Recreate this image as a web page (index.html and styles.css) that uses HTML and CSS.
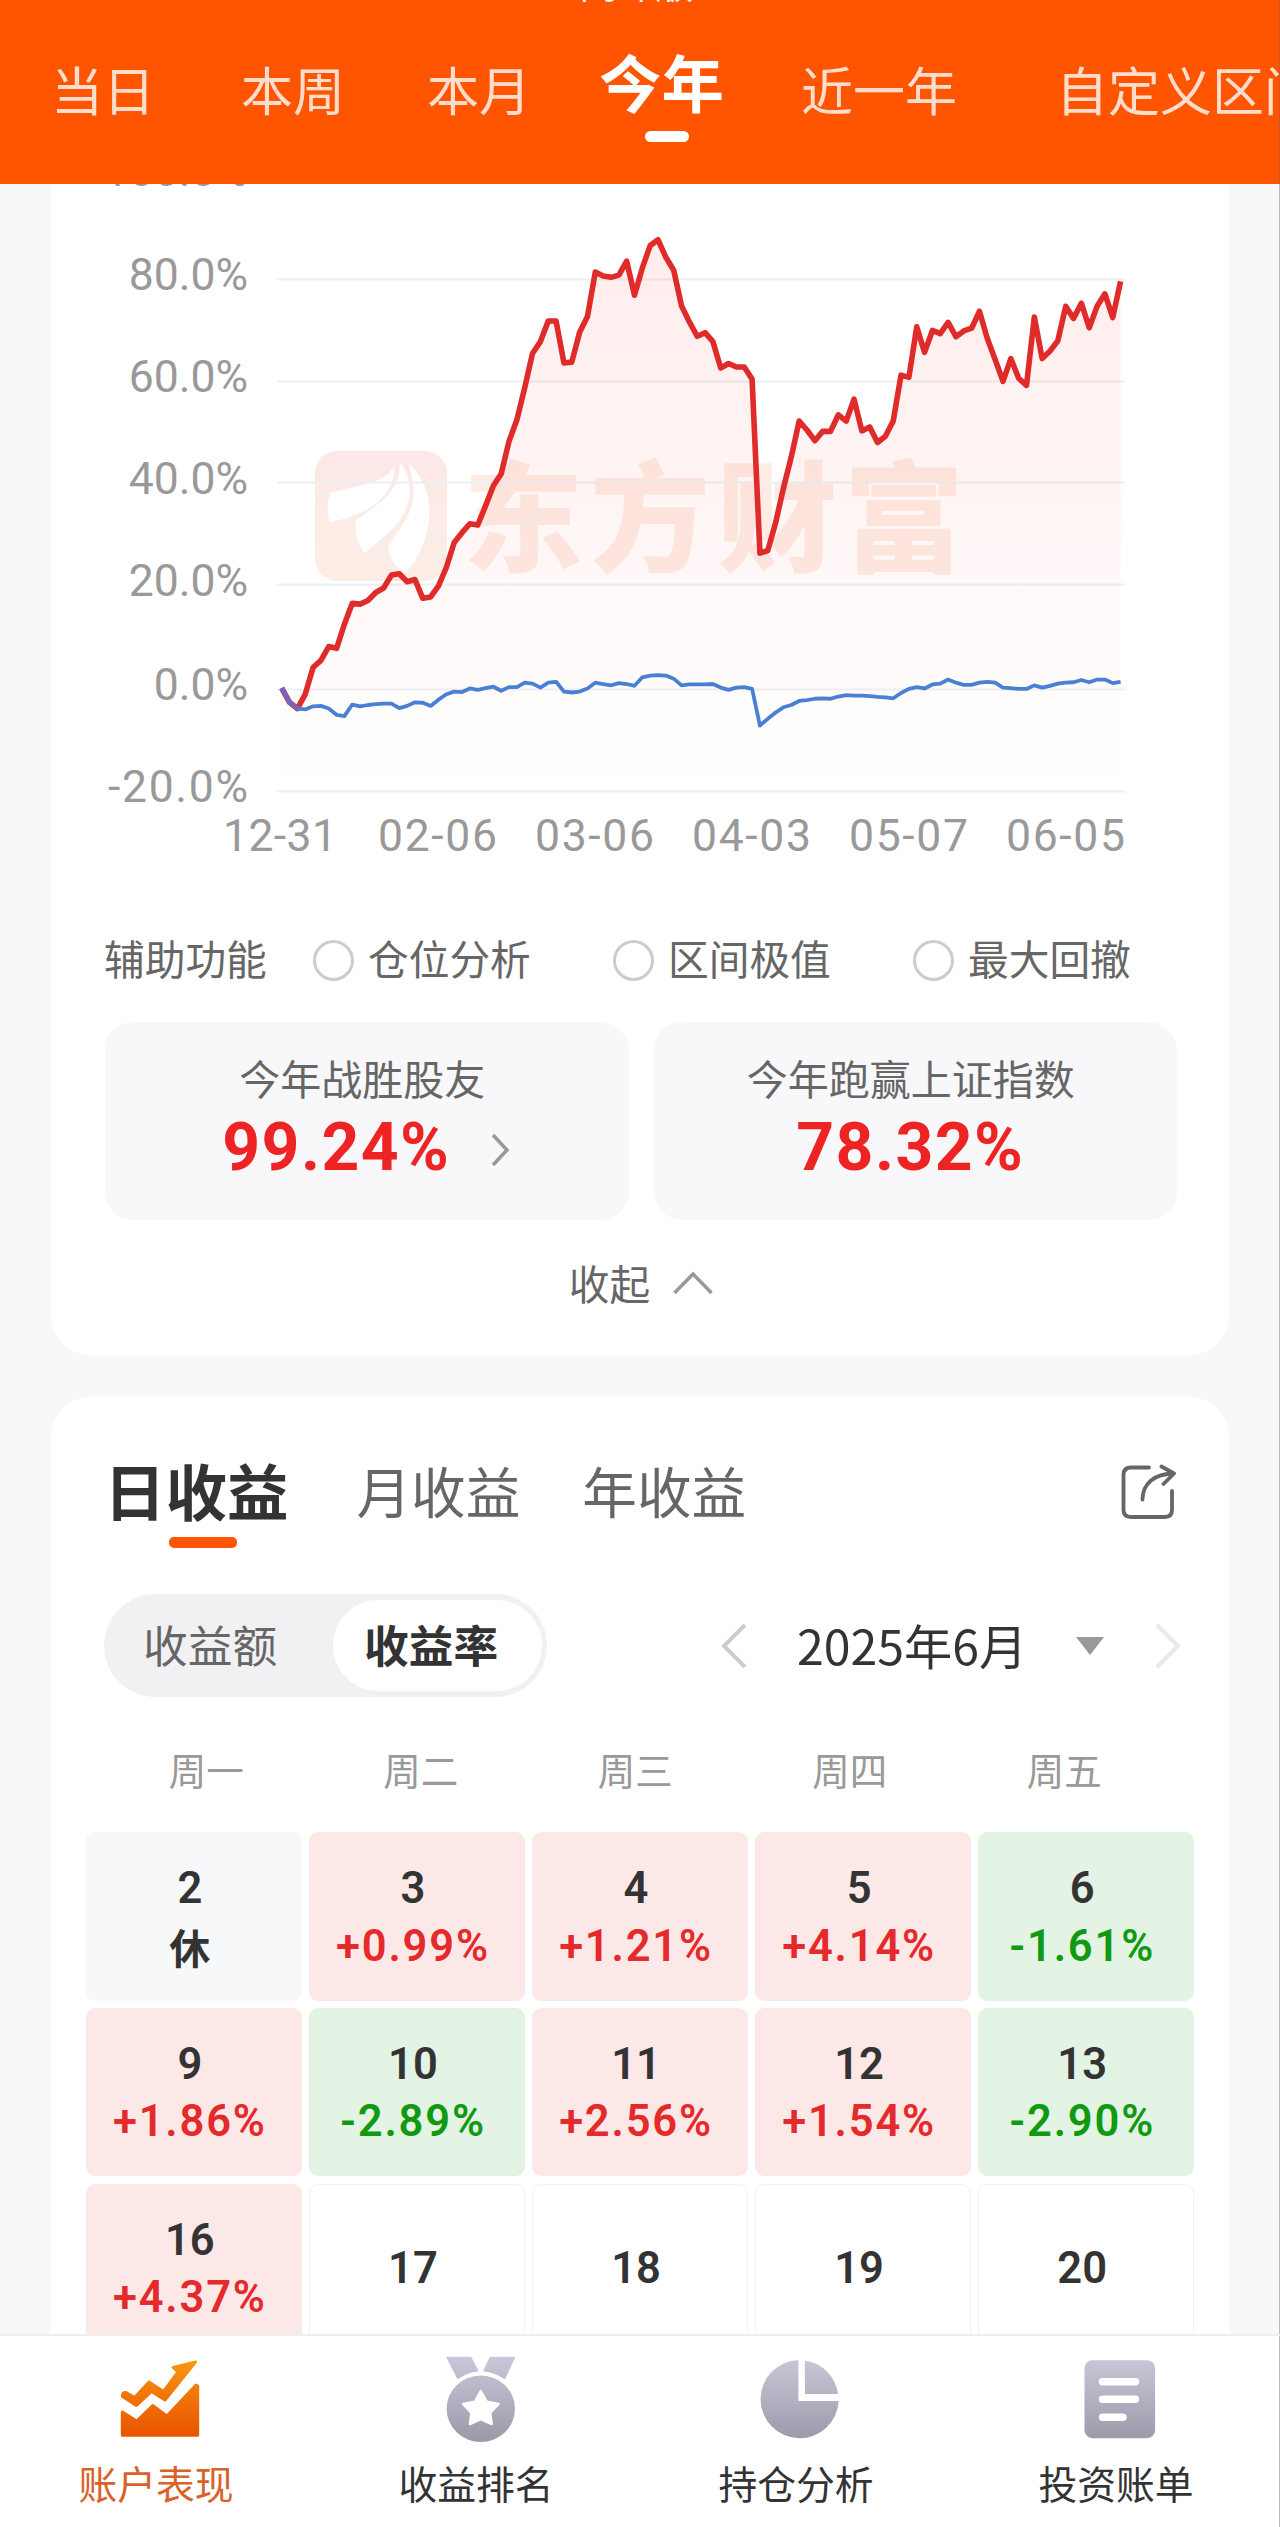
FILE: index.html
```html
<!DOCTYPE html>
<html lang="zh-CN">
<head>
<meta charset="utf-8">
<title>账户表现</title>
<link rel="stylesheet" href="styles.css">
</head>
<body>
<div class="app">
  <header class="header">
    <div class="title">问咔版</div>
    <nav class="ranges">
      <span class="range">当日</span>
      <span class="range">本周</span>
      <span class="range">本月</span>
      <span class="range active">今年</span>
      <span class="range">近一年</span>
      <span class="range">自定义区间</span>
    </nav>
  </header>

  <main class="content">
    <section class="card chart-card">
      <svg class="chart" viewBox="51 184 1178 704">
        <defs>
          <linearGradient id="area" x1="0" y1="0" x2="0" y2="1">
            <stop offset="0" stop-color="#f8453a" stop-opacity=".1"/>
            <stop offset="1" stop-color="#f8453a" stop-opacity="0"/>
          </linearGradient>
          <linearGradient id="mark" x1="0" y1="0" x2="0" y2="1">
            <stop offset="0" stop-color="#fce8e6"/>
            <stop offset="1" stop-color="#fceee6"/>
          </linearGradient>
        </defs>
        <rect x="315" y="451" width="132" height="130" rx="22" fill="url(#mark)"/>
        <g transform="translate(300 440) scale(.3333)" fill="#fff">
          <path d="M284 74C262 128 190 132 92 158Q76 195 88 247C200 226 284 175 284 74Z"/>
          <path d="M299 66C305 150 240 190 168 240Q160 290 193 339C280 270 340 220 328 130Q320 90 299 66Z"/>
          <path d="M325 70C365 200 320 230 265 320Q265 360 315 402C400 310 420 150 325 70Z"/>
        </g>
        <text class="watermark" x="463" y="563">东方财富</text>
        <g class="grid">
          <path d="M277 279.5H1125M277 381.5H1125M277 482.5H1125M277 584.5H1125M277 689.5H1125M277 791.5H1125"/>
        </g>
        <g transform="translate(281.7 180) scale(7.84 .44643)">
          <path fill="url(#area)" d="M0 1138L1 1170 2 1184 3 1152 4 1092 5 1076 6 1045 7 1049 8 995 9 948 10 950 11 942 12 924 13 914 14 885 15 882 16 900 17 895 18 937 19 934 20 909 21 868 22 812 23 790 24 770 25 773 26 730 27 685 28 658 29 585 30 537 31 465 32 388 33 362 34 316 35 316 36 410 37 408 38 341 39 306 40 206 41 215 42 218 43 213 44 182 45 258 46 197 47 147 48 134 49 173 50 202 51 282 52 318 53 350 54 342 55 362 56 421 57 411 58 419 59 419 60 446 61 836 62 830 63 768 64 690 65 620 66 540 67 560 68 584 69 563 70 563 71 526 72 540 73 491 74 562 75 553 76 588 77 574 78 540 79 437 80 442 81 329 82 386 83 337 84 344 85 319 86 351 87 338 88 332 89 294 90 355 91 402 92 451 93 400 94 444 95 460 96 307 97 400 98 383 99 360 100 283 101 310 102 276 103 331 104 283 105 255 106 308 107 227V1368H0Z"/>
          <path class="line red" d="M0 1138L1 1170 2 1184 3 1152 4 1092 5 1076 6 1045 7 1049 8 995 9 948 10 950 11 942 12 924 13 914 14 885 15 882 16 900 17 895 18 937 19 934 20 909 21 868 22 812 23 790 24 770 25 773 26 730 27 685 28 658 29 585 30 537 31 465 32 388 33 362 34 316 35 316 36 410 37 408 38 341 39 306 40 206 41 215 42 218 43 213 44 182 45 258 46 197 47 147 48 134 49 173 50 202 51 282 52 318 53 350 54 342 55 362 56 421 57 411 58 419 59 419 60 446 61 836 62 830 63 768 64 690 65 620 66 540 67 560 68 584 69 563 70 563 71 526 72 540 73 491 74 562 75 553 76 588 77 574 78 540 79 437 80 442 81 329 82 386 83 337 84 344 85 319 86 351 87 338 88 332 89 294 90 355 91 402 92 451 93 400 94 444 95 460 96 307 97 400 98 383 99 360 100 283 101 310 102 276 103 331 104 283 105 255 106 308 107 227"/>
          <path class="line blue" d="M0 1138L1 1170 2 1184 3 1186 4 1179 5 1178 6 1184 7 1198 8 1201 9 1175 10 1179 11 1176 12 1174 13 1173 14 1173 15 1183 16 1178 17 1170 18 1171 19 1178 20 1164 21 1152 22 1146 23 1147 24 1139 25 1142 26 1138 27 1135 28 1144 29 1136 30 1136 31 1126 32 1128 33 1137 34 1126 35 1124 36 1146 37 1148 38 1146 39 1139 40 1126 41 1129 42 1132 43 1127 44 1129 45 1133 46 1114 47 1110 48 1109 49 1110 50 1117 51 1132 52 1130 53 1130 54 1130 55 1129 56 1137 57 1142 58 1137 59 1136 60 1140 61 1222 62 1207 63 1193 64 1181 65 1176 66 1167 67 1165 68 1162 69 1161 70 1162 71 1157 72 1154 73 1155 74 1155 75 1156 76 1158 77 1159 78 1161 79 1149 80 1140 81 1136 82 1139 83 1130 84 1128 85 1119 86 1126 87 1131 88 1131 89 1126 90 1124 91 1126 92 1137 93 1138 94 1140 95 1140 96 1132 97 1137 98 1133 99 1128 100 1126 101 1125 102 1120 103 1125 104 1119 105 1119 106 1127 107 1124"/>
          <path class="line start" d="M0 1138L1 1170 2 1184"/>
        </g>
        <g class="axis end">
          <text x="248" y="186">100.0%</text>
          <text x="248" y="290">80.0%</text>
          <text x="248" y="392">60.0%</text>
          <text x="248" y="494">40.0%</text>
          <text x="248" y="596">20.0%</text>
          <text x="248" y="700">0.0%</text>
          <text x="248" y="802" textLength="140" lengthAdjust="spacing">-20.0%</text>
        </g>
        <g class="axis">
          <text x="223" y="851" textLength="114">12-31</text>
          <text x="378" y="851" textLength="119">02-06</text>
          <text x="535" y="851" textLength="119">03-06</text>
          <text x="692" y="851" textLength="119">04-03</text>
          <text x="849" y="851" textLength="119">05-07</text>
          <text x="1006" y="851" textLength="119">06-05</text>
        </g>
      </svg>

      <div class="aux">
        <span class="aux-label">辅助功能</span>
        <span class="option"><i class="radio"></i>仓位分析</span>
        <span class="option"><i class="radio"></i>区间极值</span>
        <span class="option"><i class="radio"></i>最大回撤</span>
      </div>

      <div class="stats">
        <div class="stat">
          <div class="stat-name">今年战胜股友</div>
          <div class="stat-value">99.24%
            <svg class="more" width="20" height="34" viewBox="0 0 20 34"><path d="M2 2L16 17 2 32" fill="none" stroke="#999" stroke-width="3.5"/></svg>
          </div>
        </div>
        <div class="stat right">
          <div class="stat-name">今年跑赢上证指数</div>
          <div class="stat-value">78.32%</div>
        </div>
      </div>

      <div class="collapse">收起
        <svg width="40" height="24" viewBox="0 0 40 24"><path d="M1.500 22L20 3 38.500 22" fill="none" stroke="#999" stroke-width="3.500"/></svg>
      </div>
    </section>

    <section class="card calendar-card">
      <div class="tabs">
        <span class="tab active">日收益</span>
        <span class="tab">月收益</span>
        <span class="tab">年收益</span>
        <svg class="share" width="56" height="56" viewBox="0 0 56 56" fill="none" stroke="#666" stroke-width="3.800" stroke-linecap="round" stroke-linejoin="round">
          <path d="M28 3.500H10Q2.500 3.500 2.500 11V46Q2.500 53 10 53H44Q51 53 51 46V27"/>
          <path d="M21.500 35.500C21.500 20 33 9.500 53 9.500M40.500 2.500L53 9.500 42.500 20"/>
        </svg>
      </div>

      <div class="controls">
        <div class="toggle">
          <span class="choice">收益额</span>
          <span class="choice on">收益率</span>
        </div>
        <div class="month">
          <svg width="28" height="46" viewBox="0 0 28 46"><path d="M25 2L4 23 25 44" fill="none" stroke="#ccc" stroke-width="4"/></svg>
          <span class="month-name">2025年6月</span>
          <i class="caret"></i>
          <svg width="28" height="46" viewBox="0 0 28 46"><path d="M3 2L24 23 3 44" fill="none" stroke="#e9e9e9" stroke-width="4"/></svg>
        </div>
      </div>

      <div class="weekdays">
        <span>周一</span><span>周二</span><span>周三</span><span>周四</span><span>周五</span>
      </div>

      <div class="days">
        <div class="day rest"><b>2</b><b class="off">休</b></div>
        <div class="day up"><b>3</b><em>+0.99%</em></div>
        <div class="day up"><b>4</b><em>+1.21%</em></div>
        <div class="day up"><b>5</b><em>+4.14%</em></div>
        <div class="day down"><b>6</b><em>-1.61%</em></div>
        <div class="day up"><b>9</b><em>+1.86%</em></div>
        <div class="day down"><b>10</b><em>-2.89%</em></div>
        <div class="day up"><b>11</b><em>+2.56%</em></div>
        <div class="day up"><b>12</b><em>+1.54%</em></div>
        <div class="day down"><b>13</b><em>-2.90%</em></div>
        <div class="day up"><b>16</b><em>+4.37%</em></div>
        <div class="day"><b>17</b></div>
        <div class="day"><b>18</b></div>
        <div class="day"><b>19</b></div>
        <div class="day"><b>20</b></div>
      </div>
    </section>
  </main>

  <nav class="bottom">
    <a class="item current">
      <svg width="80" height="90" viewBox="0 0 80 90">
        <defs>
          <linearGradient id="hot" gradientUnits="userSpaceOnUse" x1="0" y1="5" x2="0" y2="82"><stop offset="0" stop-color="#f89a10"/><stop offset=".5" stop-color="#f07208"/><stop offset="1" stop-color="#e85400"/></linearGradient>
          <linearGradient id="cool" gradientUnits="userSpaceOnUse" x1="0" y1="3" x2="0" y2="86"><stop offset="0" stop-color="#c8c6d8"/><stop offset="1" stop-color="#9c9aa9"/></linearGradient>
        </defs>
        <g fill="url(#hot)" stroke="url(#hot)" stroke-width="3" stroke-linejoin="round">
          <path d="M6 37.500L14.700 42.500 29 27 43.500 36.500 58 17 53 12.500 75.500 7 45 45 31.500 36.500 16.500 50.500 2.500 41.500Q2 37 6 37.500Z"/>
          <path d="M2.300 57L16.700 66 32.700 50.500 46.900 61 76 30 77.700 31V80.200H2.300Z"/>
        </g>
      </svg>
      <span>账户表现</span>
    </a>
    <a class="item">
      <svg width="80" height="90" viewBox="0 0 80 90">
        <g fill="url(#cool)" stroke="url(#cool)" stroke-width="2" stroke-linejoin="round">
          <path d="M7.500 2.700H30.500L37.200 15.500Q26 17 18 23Z"/>
          <path d="M50.500 2.700H74L64.500 23Q56 17 44.400 15.500Z"/>
        </g>
        <ellipse cx="40.800" cy="53.800" rx="34.200" ry="33.300" fill="url(#cool)"/>
        <path d="M40.800 36L46.600 46.700 58.500 49 50.200 57.800 51.700 69 40.800 64 29.900 69 31.400 57.800 23.100 49 35 46.700Z" fill="#fff" stroke="#fff" stroke-width="2.500" stroke-linejoin="round"/>
      </svg>
      <span>收益排名</span>
    </a>
    <a class="item">
      <svg width="80" height="90" viewBox="0 0 80 90">
        <path fill="url(#cool)" d="M38.400 5.100A39.100 39.100 0 1 0 78.700 46H38.400Z"/>
        <path fill="url(#cool)" d="M44.900 5.500A39 39 0 0 1 78 39H44.900Z"/>
      </svg>
      <span>持仓分析</span>
    </a>
    <a class="item">
      <svg width="80" height="90" viewBox="0 0 80 90">
        <rect x="4.500" y="5.200" width="70.600" height="78" rx="8" fill="url(#cool)"/>
        <path d="M22.500 26.700H55.500M22.500 44.300H55.500M22.500 62.200H43" stroke="#fff" stroke-width="7.400" stroke-linecap="round"/>
      </svg>
      <span>投资账单</span>
    </a>
  </nav>
</div>
</body>
</html>
```
FILE: styles.css
```css
* { box-sizing: border-box; }

body {
  margin: 0;
  background: #f6f8fa;
  font-family: "Noto Sans CJK SC", sans-serif;
  color: #333;
}

.app {
  width: 1280px;
  height: 2527px;
  display: flex;
  flex-direction: column;
  overflow: hidden;
  box-shadow: inset -1px 0 0 #b9bbbf;
  background: #f6f8fa;
}

.app svg { display: block; flex: none; }

/* header */
.header {
  height: 184px;
  flex: none;
  overflow: hidden;
  background: #ff5500;
  color: #fff;
  border-right: 1px solid #cf5a20;
}

.title {
  height: 36px;
  margin: -34px 0 0 -6px;
  font-size: 38px;
  line-height: 32px;
  text-align: center;
}

.ranges {
  display: flex;
  height: 150px;
  padding-left: 51px;
  white-space: nowrap;
}

.range {
  margin-right: 86px;
  padding-top: 51px;
  font-size: 52px;
  line-height: 72px;
  color: rgba(255, 255, 255, .8);
}

.range:nth-child(2) { margin-right: 82px; }
.range:nth-child(3) { margin-right: 68px; }
.range:nth-child(5) { margin-right: 99px; }

.range.active {
  margin-right: 77px;
  padding-top: 43px;
  font-size: 62.500px;
  font-weight: 700;
  color: #fff;
}

.range.active::after {
  content: "";
  display: block;
  width: 44px;
  height: 11px;
  margin: 14px 0 0 46px;
  border-radius: 6px;
  background: #fff;
}

/* cards */
.content {
  flex: 1;
  min-height: 0;
  overflow: hidden;
  padding: 0 51px;
}

.card { background: #fff; }

.chart-card {
  height: 1171px;
  border-radius: 0 0 38px 38px;
}

.chart { width: 1178px; height: 704px; }

.grid path { stroke: #edf0f3; stroke-width: 2; }

.line {
  fill: none;
  stroke-linejoin: round;
  vector-effect: non-scaling-stroke;
}

.red { stroke: #e02b2b; stroke-width: 5.600; }
.blue { stroke: #4a80d4; stroke-width: 3.800; }
.start { stroke: #7a62b4; stroke-width: 5; }

.axis text {
  font-family: Roboto, sans-serif;
  font-size: 44.500px;
  fill: #999;
}

.axis.end text { text-anchor: end; }

.watermark {
  font-size: 120px;
  font-weight: 900;
  letter-spacing: 7px;
  fill: #fdece4;
}

.aux {
  display: flex;
  align-items: center;
  height: 134px;
  padding: 6px 0 0 53px;
  font-size: 40.700px;
  line-height: 60px;
  color: #666;
}

.aux-label { width: 209px; }

.option {
  display: flex;
  align-items: center;
  gap: 14px;
  width: 300px;
  white-space: nowrap;
}

.radio {
  width: 41px;
  height: 41px;
  margin-top: 5px;
  border: 3px solid #ccc;
  border-radius: 50%;
}

.stats {
  display: flex;
  gap: 25px;
  padding: 0 52px 0 54px;
}

.stat {
  flex: 1;
  height: 198px;
  padding-top: 25px;
  border-radius: 28px;
  background: #f8f8fb;
}

.stat-name {
  margin-left: -9px;
  font-size: 41px;
  line-height: 60px;
  text-align: center;
  color: #666;
}

.stat-value {
  display: flex;
  align-items: center;
  justify-content: center;
  margin-top: 3px;
  font-family: Roboto, sans-serif;
  font-size: 66px;
  font-weight: 700;
  line-height: 76px;
  letter-spacing: 1.400px;
  color: #ee2424;
}

.stat-value .more { margin: 4px 0 0 41px; }

.stat.right .stat-value { margin-left: -10px; }

.collapse {
  display: flex;
  justify-content: center;
  align-items: center;
  gap: 23px;
  margin: 33px 0 0 2px;
  font-size: 40.700px;
  line-height: 60px;
  color: #666;
}

/* calendar */
.calendar-card {
  height: 1030px;
  margin-top: 42px;
  padding-top: 50px;
  border-radius: 38px 38px 0 0;
}

.tabs {
  display: flex;
  padding: 0 52px 0 53px;
}

.tab {
  margin-right: 62px;
  font-size: 54.600px;
  line-height: 86px;
  color: #666;
}

.tab.active {
  margin-right: 68px;
  font-size: 61.500px;
  font-weight: 700;
  color: #333;
}

.tab.active::after {
  content: "";
  display: block;
  width: 68px;
  height: 11px;
  margin: 4px 0 0 65px;
  border-radius: 5px;
  background: #ff5500;
}

.share { margin: 17px 0 0 auto; }

.controls {
  display: flex;
  justify-content: space-between;
  align-items: center;
  margin-top: 46px;
  padding: 0 47px 0 53px;
}

.toggle {
  display: flex;
  width: 443px;
  height: 103px;
  padding: 6px 5px 6px 0;
  border-radius: 52px;
  background: #f1f1f4;
}

.choice {
  width: 229px;
  padding-left: 39px;
  font-size: 44.700px;
  line-height: 88px;
  color: #666;
}

.choice.on {
  width: 209px;
  padding-left: 31px;
  border-radius: 46px;
  background: #fff;
  font-weight: 700;
  color: #333;
}

.month {
  display: flex;
  align-items: center;
}

.month-name {
  margin: -4px 0 0 49px;
  width: 228px;
  font-size: 48.200px;
  line-height: 70px;
  white-space: nowrap;
}

.caret {
  margin: 0 50px 0 51px;
  border: 14px solid transparent;
  border-top: 18px solid #999;
  border-bottom: 0;
}

.weekdays {
  display: grid;
  grid-template-columns: repeat(5, 214.500px);
  margin: 43px 0 0 48px;
  font-size: 37.500px;
  line-height: 58px;
  text-align: center;
  color: #999;
}

.days {
  display: grid;
  grid-template-columns: repeat(5, 215.700px);
  grid-auto-rows: 168.500px;
  gap: 7.400px;
  margin: 34px 0 0 35px;
}

.day {
  display: flex;
  flex-direction: column;
  justify-content: center;
  padding: 2px 8px 0 0;
  border: 1.500px solid #f1f1f3;
  border-radius: 9px;
  text-align: center;
  font-family: Roboto, sans-serif;
  font-size: 43.500px;
  line-height: 57.500px;
}

.day:has(em), .day.rest {
  justify-content: flex-start;
  padding-top: 28px;
  border: 0;
}

.day b, .day em { font-style: normal; font-weight: 600; }

.day em { letter-spacing: 1.800px; }

.day .off {
  font-family: "Noto Sans CJK SC", sans-serif;
  font-size: 41px;
}

.rest { background: #f6f8fa; }
.up { background: #fde8e8; }
.down { background: #e4f4e4; }
.up em { color: #e42a2a; }
.down em { color: #119a11; }

/* bottom navigation */
.bottom {
  display: flex;
  flex: none;
  height: 193px;
  padding-top: 19px;
  border-top: 2px solid #eeeeef;
  box-shadow: inset -1px 0 0 #b9bbbf;
  background: #fff;
}

.item {
  flex: 1;
  display: flex;
  flex-direction: column;
  align-items: center;
  font-size: 38.800px;
  line-height: 58px;
}

.item span { margin: 8px 8px 0 0; }

.current { color: #d8622a; }
```
